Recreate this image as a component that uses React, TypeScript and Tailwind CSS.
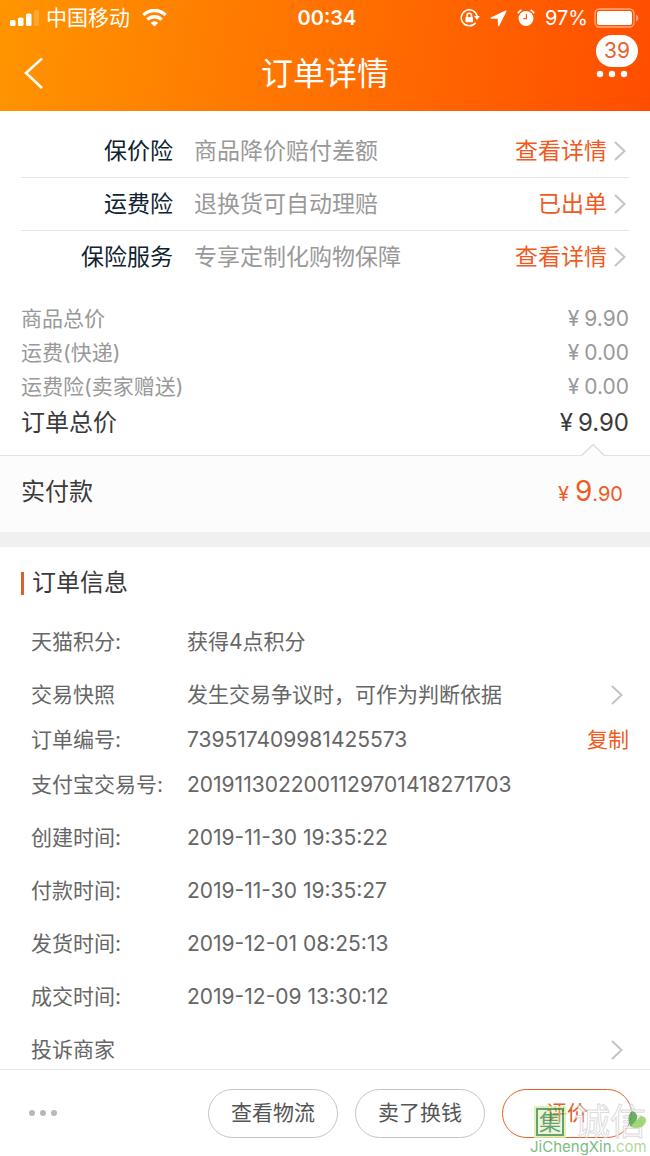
import { type ReactNode } from 'react';

// ─── Data ─────────────────────────────────────────────────────────────────────

interface InsuranceRow {
  label: string;
  desc: string;
  action: string;
}

interface InfoRow {
  label: string;
  value?: string;
  compact?: boolean;
  copy?: boolean;
  link?: boolean;
}

const INSURANCE: InsuranceRow[] = [
  { label: '保价险', desc: '商品降价赔付差额', action: '查看详情' },
  { label: '运费险', desc: '退换货可自动理赔', action: '已出单' },
  { label: '保险服务', desc: '专享定制化购物保障', action: '查看详情' },
];

const FEES = [
  { label: '商品总价', amount: '9.90' },
  { label: '运费(快递)', amount: '0.00' },
  { label: '运费险(卖家赠送)', amount: '0.00' },
];

const ORDER_INFO: InfoRow[] = [
  { label: '天猫积分:', value: '获得4点积分' },
  { label: '交易快照', value: '发生交易争议时，可作为判断依据', link: true },
  { label: '订单编号:', value: '739517409981425573', compact: true, copy: true },
  { label: '支付宝交易号:', value: '2019113022001129701418271703', compact: true },
  { label: '创建时间:', value: '2019-11-30 19:35:22' },
  { label: '付款时间:', value: '2019-11-30 19:35:27' },
  { label: '发货时间:', value: '2019-12-01 08:25:13' },
  { label: '成交时间:', value: '2019-12-09 13:30:12' },
  { label: '投诉商家', link: true },
];

// ─── Icons ────────────────────────────────────────────────────────────────────

function Chevron() {
  return (
    <svg className="h-5 w-3 shrink-0" viewBox="0 0 12 20" fill="none" stroke="#c4c4c4" strokeWidth="2">
      <path d="M1 1l9.500 9L1 19" />
    </svg>
  );
}

function SignalIcon() {
  return (
    <svg className="h-5 w-[30px]" viewBox="0 0 30 20" fill="#fff">
      <rect x="0" y="12" width="5.5" height="6" rx="1.5" />
      <rect x="8" y="9.5" width="5.5" height="8.5" rx="1.5" />
      <rect x="16" y="5.5" width="5.5" height="12.5" rx="1.5" />
      <rect x="24" y="2" width="5" height="16" rx="1.5" opacity="0.2" />
    </svg>
  );
}

function WifiIcon() {
  return (
    <svg className="h-[18px] w-[25px]" viewBox="0 0 25 18" fill="none" stroke="#fff" strokeWidth="3.4">
      <path d="M1.300 6a16 16 0 0 1 22.400 0" />
      <path d="M5.400 10.600a10.200 10.200 0 0 1 14.200 0" />
      <path d="M12.500 17.600l-3.800-3.800a5.500 5.500 0 0 1 7.600 0z" fill="#fff" stroke="none" />
    </svg>
  );
}

function RotationLockIcon() {
  return (
    <svg className="h-5 w-5" viewBox="0 0 20 20" fill="none" stroke="#fff" strokeWidth="1.5">
      <path d="M15.600 14.700A8 8 0 1 1 17.100 8.200" />
      <path d="M14 8h6l-3 4z" fill="#fff" stroke="none" />
      <rect x="5.500" y="9" width="7.500" height="5.200" rx="0.800" fill="#fff" stroke="none" />
      <path d="M7 9V7.400a2.200 2.200 0 0 1 4.500 0V9" />
    </svg>
  );
}

function LocationIcon() {
  return (
    <svg className="h-[17px] w-[17px]" viewBox="0 0 17 17" fill="#fff">
      <path d="M16.500 1.400a.8.8 0 0 0-1-.9L.9 7.500c-.7.4-.5 1.200.3 1.200l6.600.1.100 6.800c0 .8.9 1 1.200.3z" />
    </svg>
  );
}

function AlarmIcon() {
  return (
    <svg className="h-[18px] w-[18px]" viewBox="0 0 18 18" fill="none">
      <circle cx="9" cy="9.500" r="7.400" fill="#fff" />
      <path d="M9.400 5v4.700H6.200" stroke="#ff5f00" strokeWidth="1.200" />
      <path d="M.9 4.300A9 9 0 0 1 4.400 1M13.600 1a9 9 0 0 1 3.500 3.300" stroke="#fff" strokeWidth="1.800" />
    </svg>
  );
}

function BatteryIcon() {
  return (
    <svg className="h-5 w-[46px]" viewBox="0 0 46 20" fill="none">
      <rect x="1" y="1" width="39" height="18" rx="4.500" stroke="#fff" strokeOpacity="0.500" strokeWidth="1.300" />
      <rect x="3" y="3" width="35" height="14" rx="2.500" fill="#fff" />
      <path d="M42 6.500q2.500 1 2.500 3.500T42 13.500z" fill="#fff" fillOpacity="0.500" />
    </svg>
  );
}

function Leaf() {
  return (
    <svg className="h-5 w-5" viewBox="0 0 20 20">
      <path d="M3 17C-1 11 0 4 4 1c6 1 8 9-1 16z" fill="#4c9f45" />
      <path d="M3 17c2-4 4-5 8-9 1-3 7-2 7 2 0 6-7 10-15 7z" fill="#8fd05a" />
    </svg>
  );
}

// ─── Sections ─────────────────────────────────────────────────────────────────

function Header() {
  return (
    <header className="bg-linear-[100deg] from-[#ff9500] to-[#ff4d00] text-white">
      <div className="grid h-9 grid-cols-[1fr_auto_1fr] items-center pr-2.5 pl-2.5">
        <div className="flex items-center gap-1.5">
          <SignalIcon />
          <span className="text-[21px] leading-7">中国移动</span>
          <span className="pl-1.5">
            <WifiIcon />
          </span>
        </div>
        <time className="pl-1 text-[20px] leading-7 font-semibold">00:34</time>
        <div className="flex items-center justify-end gap-2.5">
          <RotationLockIcon />
          <LocationIcon />
          <AlarmIcon />
          <span className="text-[20px] leading-7">97%</span>
          <span className="-ml-1">
            <BatteryIcon />
          </span>
        </div>
      </div>

      <div className="grid h-[75px] grid-cols-[1fr_auto_1fr] items-center px-[21px]">
        <button type="button" aria-label="返回" className="justify-self-start">
          <svg className="h-8 w-6" viewBox="0 0 24 32" fill="none" stroke="#fff" strokeWidth="2.5">
            <path d="M21 0.500L5 15l16 15" />
          </svg>
        </button>
        <h1 className="text-[32px] leading-10 font-normal">订单详情</h1>
        <button type="button" aria-label="更多" className="relative justify-self-end">
          <svg className="h-2 w-[34px]" viewBox="0 0 34 8" fill="#fff">
            <circle cx="5" cy="4" r="3.200" />
            <circle cx="17" cy="4" r="3.200" />
            <circle cx="29" cy="4" r="3.200" />
          </svg>
          <span className="absolute -right-[9px] bottom-[11px] h-8 w-[42px] rounded-full bg-white text-center text-[21px] leading-8 text-[#e8622d]">
            39
          </span>
        </button>
      </div>
    </header>
  );
}

function InsuranceList() {
  return (
    <ul className="px-[21px] pt-3.5 text-[23px] leading-8">
      {INSURANCE.map((row) => (
        <li key={row.label} className="flex h-[53px] items-center border-b border-[#e4e4e4] last:border-transparent">
          <span className="w-[152px] shrink-0 text-right text-[#0f2230]">{row.label}</span>
          <span className="flex-1 pl-[21px] text-[#999]">{row.desc}</span>
          <a href="#" className="flex items-center gap-[7px] pr-[3px] text-[#f05a1e]">
            {row.action}
            <Chevron />
          </a>
        </li>
      ))}
    </ul>
  );
}

function Yen({ children }: { children: ReactNode }) {
  return (
    <span className="flex items-baseline gap-[5px]">
      <span>¥</span>
      <span>{children}</span>
    </span>
  );
}

function Fees() {
  return (
    <div className="px-[21px] pt-[18px] pb-[13px] text-[#999]">
      {FEES.map((fee) => (
        <div key={fee.label} className="flex h-[34px] items-center justify-between text-[21px] leading-7">
          <span>{fee.label}</span>
          <Yen>{fee.amount}</Yen>
        </div>
      ))}
      <div className="flex h-[38px] items-center justify-between text-[24px] leading-8 text-[#3a3a3a]">
        <span>订单总价</span>
        <Yen>9.90</Yen>
      </div>
    </div>
  );
}

function Paid() {
  return (
    <div className="relative flex h-[77px] items-center justify-between border-t border-[#e4e4e4] bg-[#fcfcfc] pr-[27px] pb-1 pl-[21px]">
      <svg className="absolute right-[45px] bottom-full h-3 w-6" viewBox="0 0 24 12">
        <path d="M0 12L12 0.500L24 12" fill="#fcfcfc" stroke="#dedede" strokeWidth="1.500" />
      </svg>
      <span className="text-[24px] leading-8 text-[#3a3a3a]">实付款</span>
      <span className="flex items-baseline text-[20px] leading-8 text-[#f05a1e]">
        ¥<span className="pl-1.5 text-[28px]">9</span>.90
      </span>
    </div>
  );
}

function OrderInfo() {
  return (
    <section className="border-t-[15px] border-[#f0f0f0] px-[21px] pt-[18px] pb-1">
      <h2 className="flex h-9 items-center gap-2 text-[24px] leading-9 font-normal text-[#3a3a3a]">
        <span className="h-[23px] w-[3px] bg-[#e0602a]" />
        订单信息
      </h2>
      <dl className="pt-0.5 pl-2.5 text-[21px] leading-[29px] text-[#666]">
        {ORDER_INFO.map((row) => (
          <div key={row.label} className={`flex items-center ${row.compact ? 'pt-4' : 'pt-6'}`}>
            <dt className="w-[156px] shrink-0">{row.label}</dt>
            <dd className="flex flex-1 items-center justify-between">
              <span>{row.value}</span>
              {row.copy && (
                <button type="button" className="text-[#f05a1e]">
                  复制
                </button>
              )}
              {row.link && (
                <a href="#" aria-label={row.label} className="pr-1.5">
                  <Chevron />
                </a>
              )}
            </dd>
          </div>
        ))}
      </dl>
    </section>
  );
}

function Watermark() {
  return (
    <div className="pointer-events-none absolute right-0 bottom-0 w-[120px]">
      <div className="flex items-center gap-2.5 opacity-80">
        <span className="ml-1.5 h-7 w-7 shrink-0 border-2 border-[#3f8a50] bg-[#cdeb9a]/50 text-center text-[22px] leading-6 text-[#3f8a50] outline-2 outline-[#d9f0a8]">
          集
        </span>
        <span className="text-[36px] leading-8 whitespace-nowrap text-white [-webkit-text-stroke:1px_#d4d4d4]">
          诚信
        </span>
      </div>
      <span className="absolute top-1 right-0.5 opacity-80">
        <Leaf />
      </span>
      <div className="text-[15px] leading-[18px] whitespace-nowrap text-[#7cba84]">
        JiChengXin<span className="text-[#b2d99c]">.com</span>
      </div>
    </div>
  );
}

function Footer() {
  return (
    <footer className="relative mt-auto flex h-[87px] items-center justify-between border-t border-[#e4e4e4] bg-white pr-[18px] pl-7 text-[21px] leading-7 text-[#555]">
      <button type="button" aria-label="更多操作">
        <svg className="h-2 w-8" viewBox="0 0 32 8" fill="#b8b8b8">
          <circle cx="4" cy="4" r="3" />
          <circle cx="15" cy="4" r="3" />
          <circle cx="26" cy="4" r="3" />
        </svg>
      </button>
      <div className="flex gap-[17px]">
        <button type="button" className="h-[49px] w-[130px] rounded-full border border-[#c4c4c4]">
          查看物流
        </button>
        <button type="button" className="h-[49px] w-[130px] rounded-full border border-[#c4c4c4]">
          卖了换钱
        </button>
        <button type="button" className="h-[49px] w-[130px] rounded-full border border-[#e0602a] text-[#e0602a]">
          评价
        </button>
      </div>
      <Watermark />
    </footer>
  );
}

export default function App() {
  return (
    <div className="flex min-h-screen flex-col bg-white font-['Inter','Noto_Sans_CJK_SC',sans-serif]">
      <Header />
      <main>
        <InsuranceList />
        <Fees />
        <Paid />
        <OrderInfo />
      </main>
      <Footer />
    </div>
  );
}
